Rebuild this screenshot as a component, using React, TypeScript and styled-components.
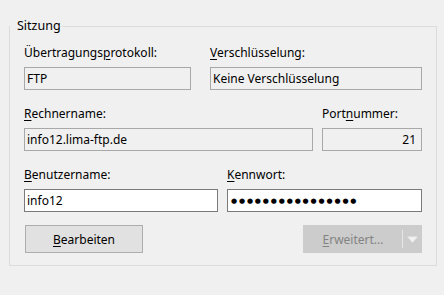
import React from "react";
import styled, { createGlobalStyle } from "styled-components";

const GlobalStyle = createGlobalStyle`
  html, body {
    margin: 0;
    background: #f0f0f0;
  }
  body {
    font-family: "Noto Sans", "Open Sans", "DejaVu Sans", sans-serif;
    font-size: 12px;
    color: #000;
  }
`;

function Field({
  label,
  value,
  width,
  editable,
  alignRight,
  children,
}: {
  label: React.ReactNode;
  value?: string;
  width: number;
  editable?: boolean;
  alignRight?: boolean;
  children?: React.ReactNode;
}) {
  return (
    <FieldBox style={{ width }}>
      <Label>{label}</Label>
      <TextBox $editable={editable} $alignRight={alignRight}>
        {children ?? value}
      </TextBox>
    </FieldBox>
  );
}

export default function App() {
  return (
    <Page>
      <GlobalStyle />
      <GroupBox>
        <Legend>Sitzung</Legend>
        <Content>
          <Rows>
            <Row>
              <Field
                width={167}
                value="FTP"
                label={
                  <>
                    Übertragungs<Key>p</Key>rotokoll:
                  </>
                }
              />
              <Field
                width={212}
                value="Keine Verschlüsselung"
                label={
                  <>
                    <Key>V</Key>erschlüsselung:
                  </>
                }
              />
            </Row>
            <Row>
              <Field
                width={289}
                value="info12.lima-ftp.de"
                label={
                  <>
                    <Key>R</Key>echnername:
                  </>
                }
              />
              <Field
                width={100}
                value="21"
                alignRight
                label={
                  <>
                    Port<Key>n</Key>ummer:
                  </>
                }
              />
            </Row>
            <Row>
              <Field
                width={194}
                value="info12"
                editable
                label={
                  <>
                    <Key>B</Key>enutzername:
                  </>
                }
              />
              <Field
                width={195}
                editable
                label={
                  <>
                    <Key>K</Key>ennwort:
                  </>
                }
              >
                <Dots>{"●".repeat(16)}</Dots>
              </Field>
            </Row>
          </Rows>
          <ButtonRow>
            <Button>
              <Key>B</Key>earbeiten
            </Button>
            <SplitButton disabled>
              <SplitMain>
                <Key>E</Key>rweitert...
              </SplitMain>
              <SplitDivider />
              <SplitArrow>
                <svg width="11" height="7" viewBox="0 0 11 7">
                  <path d="M0.5 0.8 L10.5 0.8 L5.5 6.5 Z" fill="#f2f2f2" stroke="#e4e4e4" strokeWidth="0.6" />
                </svg>
              </SplitArrow>
            </SplitButton>
          </ButtonRow>
        </Content>
      </GroupBox>
    </Page>
  );
}

const Page = styled.div`
  width: 444px;
  height: 295px;
  box-sizing: border-box;
  padding: 18px 0 0 9px;
`;

const GroupBox = styled.fieldset`
  width: 428px;
  box-sizing: border-box;
  margin: 0;
  padding: 0;
  border: 1px solid #dcdcdc;
`;

const Legend = styled.legend`
  margin-left: 0;
  padding: 0 1px 0 7px;
  line-height: 16px;
  font-size: 12.5px;
  color: #000;
`;

const Content = styled.div`
  padding: 11px 14px 12px 14px;
`;

const Rows = styled.div`
  display: flex;
  flex-direction: column;
  gap: 16px;
`;

const Row = styled.div`
  display: flex;
  justify-content: space-between;
`;

const FieldBox = styled.div`
  display: flex;
  flex-direction: column;
  gap: 6px;
`;

const Label = styled.div`
  line-height: 16px;
  white-space: nowrap;
`;

const Key = styled.span`
  text-decoration: underline;
  text-underline-offset: 2px;
`;

const TextBox = styled.div<{ $editable?: boolean; $alignRight?: boolean }>`
  height: 23px;
  box-sizing: border-box;
  border: 1px solid ${(p) => (p.$editable ? "#7a7a7a" : "#a8a8a8")};
  background: ${(p) => (p.$editable ? "#ffffff" : "#f0f0f0")};
  padding: 0 5px 0 2px;
  display: flex;
  align-items: center;
  justify-content: ${(p) => (p.$alignRight ? "flex-end" : "flex-start")};
  white-space: nowrap;
`;

const Dots = styled.span`
  font-family: "DejaVu Sans", sans-serif;
  font-size: 7px;
  letter-spacing: 1.85px;
  padding-left: 1px;
`;

const ButtonRow = styled.div`
  display: flex;
  justify-content: space-between;
  margin-top: 13px;
  padding-left: 1px;
`;

const Button = styled.button`
  width: 118px;
  height: 28px;
  box-sizing: border-box;
  border: 1px solid #adadad;
  background: #e1e1e1;
  font: inherit;
  color: #000;
  padding: 0;
`;

const SplitButton = styled.button`
  width: 119px;
  height: 28px;
  box-sizing: border-box;
  border: 1px solid #cccccc;
  background: #cccccc;
  font: inherit;
  color: #838383;
  padding: 0;
  display: flex;
  align-items: stretch;
`;

const SplitMain = styled.span`
  flex: 1;
  display: flex;
  align-items: center;
  justify-content: center;
`;

const SplitDivider = styled.span`
  width: 1px;
  margin: 4px 0;
  background: #e6e6e6;
`;

const SplitArrow = styled.span`
  width: 18px;
  display: flex;
  align-items: center;
  justify-content: center;
`;
